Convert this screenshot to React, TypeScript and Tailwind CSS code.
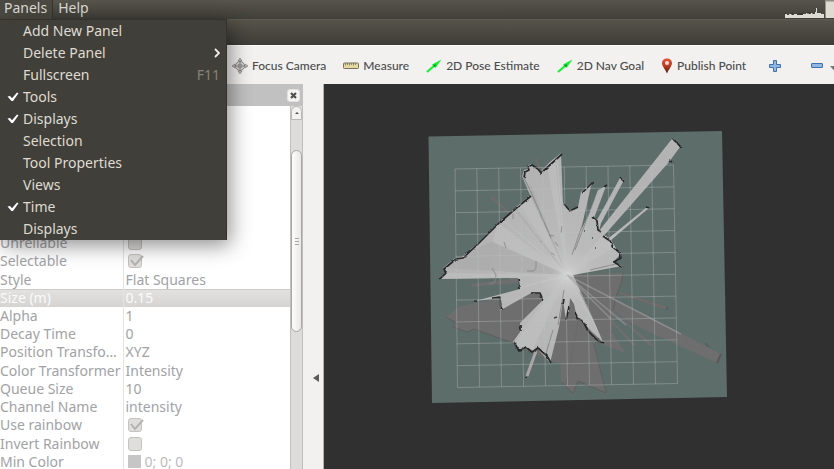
import type { ReactNode } from 'react';

type MenuEntry = { label: string; checked?: boolean; shortcut?: string; submenu?: boolean };

const menuEntries: MenuEntry[] = [
  { label: 'Add New Panel' },
  { label: 'Delete Panel', submenu: true },
  { label: 'Fullscreen', shortcut: 'F11' },
  { label: 'Tools', checked: true },
  { label: 'Displays', checked: true },
  { label: 'Selection', checked: false },
  { label: 'Tool Properties', checked: false },
  { label: 'Views', checked: false },
  { label: 'Time', checked: true },
  { label: 'Displays', checked: false },
];

type Property = { name: string; value?: string; checked?: boolean; selected?: boolean; color?: boolean };

const properties: Property[] = [
  { name: 'Unreliable', checked: false },
  { name: 'Selectable', checked: true },
  { name: 'Style', value: 'Flat Squares' },
  { name: 'Size (m)', value: '0.15', selected: true },
  { name: 'Alpha', value: '1' },
  { name: 'Decay Time', value: '0' },
  { name: 'Position Transfo…', value: 'XYZ' },
  { name: 'Color Transformer', value: 'Intensity' },
  { name: 'Queue Size', value: '10' },
  { name: 'Channel Name', value: 'intensity' },
  { name: 'Use rainbow', checked: true },
  { name: 'Invert Rainbow', checked: false },
  { name: 'Min Color', value: '0; 0; 0', color: true },
];

function MenuBar() {
  return (
    <nav className="flex h-[19px] shrink-0 items-stretch bg-linear-to-b from-[#57544b] to-[#403f39] text-sm text-[#dfdbd2]">
      <button className="flex items-center border-r border-[#35342f] bg-[#4b4941] pr-[5px] pl-1 leading-4">
        <span className="pb-[3px]">Panels</span>
      </button>
      <button className="flex items-center px-[5px] leading-4">
        <span className="pb-[3px]">Help</span>
      </button>
      <svg className="ml-auto h-[19px] w-[49px]" viewBox="785 0 49 19" aria-hidden="true">
        <path d="M785 18V14h2v1h2v-1h3v1h2v-1h3v1h6v-1h3v-1h3v1h2v-1h2v1h2v-2h1V8h1v5h4v1h3v4z" fill="#dfdbd2" />
        <path d="M785.500 14v-1M791 14h2M798 14h5M807 13h3M813 13v1" stroke="#292824" />
        <rect x="825.5" y="0" width="9" height="18" fill="#dfdbd2" />
        <rect x="825.500" y="0" width="9" height="1.500" fill="#918e86" />
      </svg>
    </nav>
  );
}

function PanelsMenu() {
  return (
    <ul
      role="menu"
      className="absolute top-[19px] left-0 z-10 w-[227px] border-t border-r border-[#33322d] bg-[#413f39] text-sm text-[#dfdbd2] shadow-[3px_5px_20px_rgba(0,0,0,0.45)]"
    >
      {menuEntries.map((entry, i) => (
        <li key={i} role="none">
          <button
            role={entry.checked === undefined ? 'menuitem' : 'menuitemcheckbox'}
            aria-checked={entry.checked}
            className="flex h-[22px] w-full items-center pr-[6px] text-left"
          >
            <span className="flex w-[23px] shrink-0 pl-[7px]">
              {entry.checked && (
                <svg className="h-[10px] w-[12px]" viewBox="0 0 12 10" aria-hidden="true">
                  <path d="M0.500 4.500 3 4l2 2.200L10 .6l1.500.7L6 9H4.500z" fill="#fff" />
                </svg>
              )}
            </span>
            <span className="grow">{entry.label}</span>
            {entry.shortcut && <span className="text-[#85827b]">{entry.shortcut}</span>}
            {entry.submenu && (
              <svg className="h-[10px] w-[7px]" viewBox="0 0 7 10" fill="none" aria-hidden="true">
                <path d="M2 1l4 4-4 4" stroke="#f0ede6" strokeWidth="1.800" />
              </svg>
            )}
          </button>
        </li>
      ))}
    </ul>
  );
}

function ToolButton({ icon, children }: { icon: ReactNode; children: string }) {
  return (
    <button className="flex shrink-0 items-center gap-1 whitespace-nowrap">
      {icon}
      {children}
    </button>
  );
}

function FocusIcon() {
  return (
    <svg className="size-4" viewBox="0 0 16 16" fill="none" stroke="#85837f" aria-hidden="true">
      <circle cx="8" cy="8" r="4.500" fill="#d5d3d0" />
      <circle cx="8" cy="8" r="2" />
      <path d="M8 2v12M2 8h12" strokeWidth=".8" />
      <path d="M8 0 6 3h4zM8 16l-2-3h4zM0 8l3-2v4zM16 8l-3-2v4z" fill="#c5c3c0" strokeWidth=".7" />
    </svg>
  );
}

function MeasureIcon() {
  return (
    <svg className="h-4 w-4" viewBox="0 0 16 16" aria-hidden="true">
      <rect x=".5" y="5" width="15" height="5.500" rx=".8" fill="#e4d9a0" stroke="#77725f" />
      <path d="M2.500 5v2.500M4.500 5v2M6.500 5v2.500M8.500 5v2M10.500 5v2.500M12.500 5v2" stroke="#77725f" strokeWidth=".8" />
    </svg>
  );
}

function ArrowIcon() {
  return (
    <svg className="h-4 w-4" viewBox="0 0 16 16" aria-hidden="true">
      <path d="M1 14 8.500 7.500" stroke="#16ef35" strokeWidth="2.200" />
      <path d="M15.500 1.500 6 6.500l3.500 3.500z" fill="#10f030" />
      <path d="m7 7 3-.5L9 9z" fill="#087c17" />
    </svg>
  );
}

function PinIcon() {
  return (
    <svg className="h-4 w-3" viewBox="0 0 12 16" aria-hidden="true">
      <defs>
        <linearGradient id="pin" x1="0" y1="0" x2="0" y2="1">
          <stop offset="0" stopColor="#e6553b" />
          <stop offset=".5" stopColor="#b83a22" />
          <stop offset="1" stopColor="#43210f" />
        </linearGradient>
      </defs>
      <path d="M6 .5c3 0 5 2 5 4.800C11 8 8 11 6 15.500 4 11 1 8 1 5.300 1 2.500 3 .5 6 .5z" fill="url(#pin)" />
      <circle cx="6" cy="5" r="2" fill="#f5dcd5" />
    </svg>
  );
}

function ToolBar() {
  return (
    <div className="flex h-[39px] shrink-0 items-center gap-[17px] border-t border-[#fbfaf9] bg-[#f2f1f0] pt-px pl-[232px] font-[Lato,'Noto_Sans',sans-serif] text-xs font-medium text-[#4c4c4c]">
      <ToolButton icon={<FocusIcon />}>Focus Camera</ToolButton>
      <ToolButton icon={<MeasureIcon />}>Measure</ToolButton>
      <ToolButton icon={<ArrowIcon />}>2D Pose Estimate</ToolButton>
      <ToolButton icon={<ArrowIcon />}>2D Nav Goal</ToolButton>
      <ToolButton icon={<PinIcon />}>Publish Point</ToolButton>
      <div className="ml-auto flex shrink-0 items-center">
        <button aria-label="Add tool" className="mr-[30px]">
          <svg className="size-3" viewBox="0 0 12 12" aria-hidden="true">
            <path d="M4.500.5h3v4h4v3h-4v4h-3v-4h-4v-3h4z" fill="#93b7e3" stroke="#3f70b4" />
          </svg>
        </button>
        <button aria-label="Remove tool" className="flex items-center gap-[7px]">
          <svg className="h-[5px] w-3" viewBox="0 0 12 5" aria-hidden="true">
            <rect x=".5" y=".5" width="11" height="4" rx=".5" fill="#93b7e3" stroke="#3f70b4" />
          </svg>
          <svg className="mt-[6px] h-[5px] w-1" viewBox="0 0 4 5" aria-hidden="true">
            <path d="M0 0h9L4.500 5z" fill="#77756f" />
          </svg>
        </button>
      </div>
    </div>
  );
}

function PropertyValue({ item }: { item: Property }) {
  if (item.checked !== undefined) {
    return (
      <span className="relative ml-[2px] flex size-[14px]">
        <input
          type="checkbox"
          aria-label={item.name}
          defaultChecked={item.checked}
          className="size-[14px] appearance-none rounded-[3px] border border-[#c5c3c0] bg-[#dfdedc]"
        />
        {item.checked && (
          <svg className="pointer-events-none absolute top-0 left-0 h-[14px] w-4" viewBox="0 0 16 14" fill="none" aria-hidden="true">
            <path d="m3 6 4 5 8-9" stroke="#b5b3b0" strokeWidth="2" />
          </svg>
        )}
      </span>
    );
  }
  return (
    <span className={item.color ? 'flex items-center gap-1 pl-[2px] text-[#bcbcbf]' : 'block'}>
      {item.color && <span className="size-[13px] bg-[#c6c6c6]" />}
      {item.value}
    </span>
  );
}

function DisplaysDock() {
  return (
    <aside className="flex w-[303px] shrink-0 flex-col">
      <header className="flex h-[22px] shrink-0 items-center justify-end bg-[#c2c1c1] pr-[3px]">
        <button
          aria-label="Close"
          className="flex size-[13px] items-center justify-center rounded-[3px] border border-[#e3e2e1] bg-[#f5f4f3]"
        >
          <svg className="size-[7px]" viewBox="0 0 7 7" aria-hidden="true">
            <path d="m1 1 5 5M6 1 1 6" stroke="#504f4c" strokeWidth="2.200" />
          </svg>
        </button>
      </header>
      <div className="flex min-h-0 grow">
        <div className="min-w-0 grow overflow-hidden bg-white pt-[128px]">
          <table className="h-[237px] w-full table-fixed border-collapse text-sm leading-[18px] text-[#a2a2a6]">
            <tbody>
              {properties.map((item) => (
                <tr
                  key={item.name}
                  className={
                    item.selected
                      ? 'bg-linear-to-b from-[#e3e2e1] to-[#d5d4d2] text-[#fafafa] shadow-[inset_0_1px_0_#cccac8]'
                      : ''
                  }
                >
                  <th
                    scope="row"
                    className="w-[123px] border-r border-[#e4e4e4] p-0 text-left font-normal whitespace-nowrap"
                  >
                    {item.name}
                  </th>
                  <td className="p-0 pl-[2px]">
                    <PropertyValue item={item} />
                  </td>
                </tr>
              ))}
            </tbody>
          </table>
        </div>
        <div className="flex w-[13px] shrink-0 flex-col border-x border-[#c1bfbb] bg-[#dddcda]">
          <button
            aria-label="Scroll up"
            className="flex h-[14px] items-center justify-center rounded-t-full border border-[#bab8b5] bg-[#f3f2f1]"
          >
            <svg className="h-[2px] w-1" viewBox="0 0 4 2" aria-hidden="true">
              <path d="M0 2 2 0l2 2z" fill="#55534f" />
            </svg>
          </button>
          <div className="mt-[30px] flex h-[182px] shrink-0 flex-col items-center justify-center gap-[2px] rounded-full border border-[#a9a7a3] bg-linear-to-r from-[#fcfcfb] to-[#e9e8e6]">
            <span className="h-px w-1 bg-[#a9a7a3]" />
            <span className="h-px w-1 bg-[#a9a7a3]" />
            <span className="h-px w-1 bg-[#a9a7a3]" />
          </div>
        </div>
      </div>
    </aside>
  );
}

const corners = { tl: [455, 169], tr: [673.5, 165], br: [677.5, 383.5], bl: [457.5, 387.5] };

function mix(a: number[], b: number[], t: number) {
  return [a[0] + (b[0] - a[0]) * t, a[1] + (b[1] - a[1]) * t];
}

function line(a: number[], b: number[]) {
  return `M${a[0]} ${a[1]}L${b[0]} ${b[1]}`;
}

const gridPath = Array.from({ length: 11 }, (_, i) => i / 10)
  .map(
    (t) =>
      line(mix(corners.tl, corners.bl, t), mix(corners.tr, corners.br, t)) +
      line(mix(corners.tl, corners.tr, t), mix(corners.bl, corners.br, t)),
  )
  .join('');

const freeSpace =
  'M440 279 446 272 443 268 455 258 462 257 478 243 498 223 514 209 530 195 522 176 524 170 528 169 527 166 531 164 537 169 540 172 550 162 561 153 563 203 570 211 578 207 581 192 592 182 581 230 588 216 598 190 606 186 594 218 597 220 620 178 624 180 601 223 599 231 672 139 680 147 669 162 608 231 604 235 609 238 647 207 649 208 611 240 620 255 613 262 622 266 573 275 590 312 603 342 592 332 583 322 577 318 574 304 570 298 569 310 566 320 563 300 559 327 550 363 537 348 532 352 525 347 520 350 513 342 520 332 520 323 543 300 541 294 533 292 501 310 499 298 475 301 520 289 518 278z';

function MapView() {
  return (
    <main className="min-w-0 grow bg-[#303030]">
      <svg className="block h-full w-full" viewBox="324 84 510 385" role="img" aria-label="Map">
        <defs>
          <clipPath id="free">
            <path d={freeSpace} />
          </clipPath>
          <filter id="rough" x="-5%" y="-5%" width="110%" height="110%">
            <feTurbulence type="fractalNoise" baseFrequency=".22" numOctaves="1" seed="4" result="noise" />
            <feDisplacementMap in="SourceGraphic" in2="noise" scale="3" xChannelSelector="R" yChannelSelector="G" />
          </filter>
          <radialGradient id="glow" gradientUnits="userSpaceOnUse" cx="567" cy="275" r="95">
            <stop offset="0" stopColor="#cacaca" />
            <stop offset=".3" stopColor="#bbbbbb" />
            <stop offset="1" stopColor="#b3b3b3" />
          </radialGradient>
          <radialGradient id="center" gradientUnits="userSpaceOnUse" cx="567" cy="275" r="16">
            <stop offset="0" stopColor="#d8d8d8" />
            <stop offset="1" stopColor="#c4c4c4" stopOpacity="0" />
          </radialGradient>
        </defs>
        <path d="M428.500 136.500 722 131l5 266-295 6z" fill="#5d6d6a" />

        <g fill="#6e6e6e">
          <path d="M446 317 460 306 500 298 567 275 623 273 621 284 617 297 613 303 615 310 612 332 625 353 606 346 594 340 606 393 578 381 573 393 567 388 561 382 560 363 549 361 513 343 474 329 467 332 453 327 455 322z" />
          <path d="M567 275 721 354 717 363 630 323z" />
          <path d="m471 284 47-6 1 5-47 4zM570 276l67 70-5-1zM577 280l79 67-7-2z" />
        </g>
        <g stroke="#716b6a" fill="none">
          <path d="m491 197 17 15M620 293l46 15M536 158l4 12" strokeWidth="2" />
          <path d="m446 317 9 5-2 5 14 5 7-3 39 14M613 310l3-13 5-13 2-11M594 344l12 49-28-12-5 12-6-5-5-6" stroke="#5f5e5d" />
          <path d="m717 363 4-9" stroke="#595857" strokeWidth="2" />
          <path d="m706 343 2 4M667 307v3M679 332l2 2" stroke="#555453" />
        </g>
        <path d="M579 318 566 384" stroke="#656565" strokeWidth="1" opacity=".5" />

        <path d={freeSpace} fill="url(#glow)" />
        <g clipPath="url(#free)">
          <path d="M567 275 443 268 462 257 492 241zM567 275 514 209 519 204zM567 275 530 195 522 176 532 188z" fill="#a8a8a8" opacity=".6" />
          <path d="m567 275-50-66 13-14zM567 275l-75-33 6-19zM567 275l-20-110 8-8zM567 275 440 279l5-6zM567 275l-54 70 20 5zM567 275l40-45 20 10z" fill="#c6c6c6" opacity=".45" />
          <path d="m551 238-20-46-9-18M572 255l12-35 8-37M575 250l20-52M553 330l-8 27M564 290l-6 35M580 292l12 24M590 270l30-7" stroke="#777777" fill="none" opacity=".7" />
          <path d="m598 225 73-84M567 275l55-3M567 275l-93 25M567 275l-54 67M567 275l36 65M567 275l-63-55M567 275l-10-115" stroke="#d7d7d7" fill="none" opacity=".3" />
          <circle cx="567" cy="275" r="16" fill="url(#center)" />
        </g>
        <path d="m567 275 114 59M567 275l44 44M567 275l59 50" fill="none" stroke="#a0a0a0" strokeWidth="1.500" opacity=".6" />
        <path d="m536 351-9 25" stroke="#aaa5a4" strokeWidth="3" />

        <g filter="url(#rough)" fill="none" stroke="#272727" strokeWidth="1.700" strokeLinejoin="round">
          <path d="M440 279 446 273 444 269 456 259 463 258 478 244 498 224 514 210 531 196M524 178l1-6 4-2-1-3 4-2 6 4 3 4 10-9 11-10M564 204l6 7 8-4" />
          <path d="m582 193 11-11M604 187l3-2M620 178l4 3M673 139l8 8M669 160l3 2M646 207l3 1M592 217l5 4 1 9 3 2M603 236l7 5 3 6 7 6 1 5-7 4 8 5" />
          <path d="M519 278l1 11M492 298l8-1 1 12M531 293l9 0 3 7M521 325l0 6M514 342l5 9 7-4 6 5 6-4 9 8 4 7M564 299l-1 5M569 307l-3 13M575 312l2 6 6 3 5 10 10 10 6 2M475 301h2M526 377v2" />
        </g>
        <g fill="none" stroke="#858585" opacity=".8">
          <path d="M504 242l2 6M536 261v7l-2 3h-7M492 268l4 7-1 7-6 2M541 241v1M549 235l5 1M555 242l3 4M551 253l4 2M561 233l1-7M513 214v5" />
          <path d="M592 238h1M595 248h1M584 231h1M554 318l3-1" stroke="#292929" strokeWidth="1.500" />
        </g>
        <path d={gridPath} fill="none" stroke="#bdc4c2" strokeOpacity=".36" />
      </svg>
    </main>
  );
}

export default function App() {
  return (
    <div className="relative flex h-screen flex-col overflow-hidden bg-[#f2f1f0] font-['Noto_Sans','Open_Sans',sans-serif]">
      <MenuBar />
      <PanelsMenu />
      <div className="h-[26px] shrink-0 border-t border-[#5f5b52] bg-linear-to-b from-[#56534a] to-[#3e3d38]" />
      <ToolBar />
      <div className="flex min-h-0 grow">
        <DisplaysDock />
        <button
          aria-label="Collapse panel"
          className="flex w-[21px] shrink-0 items-end justify-end border-r border-[#b4b2ae] pr-1 pb-[87px]"
        >
          <svg className="h-2 w-[6px]" viewBox="0 0 6 8" aria-hidden="true">
            <path d="M6 0v8L0 4z" fill="#5c5b58" />
          </svg>
        </button>
        <MapView />
      </div>
    </div>
  );
}
